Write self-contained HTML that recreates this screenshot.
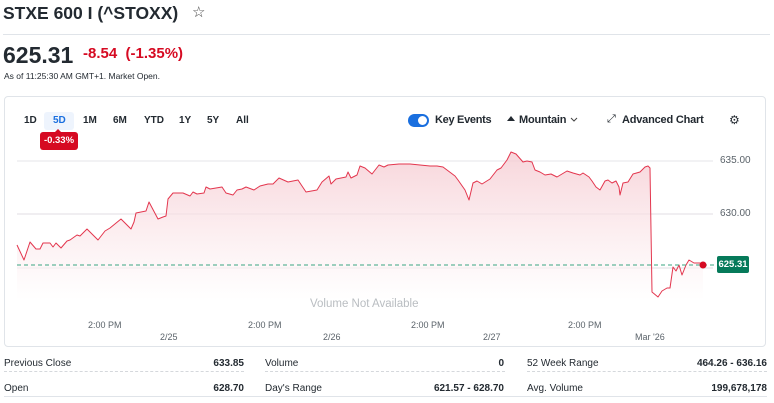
<!DOCTYPE html>
<html><head><meta charset="utf-8"><style>
*{margin:0;padding:0;box-sizing:border-box}
body{width:774px;height:403px;background:#fff;font-family:"Liberation Sans",sans-serif;color:#232a31;position:relative;overflow:hidden}
.a{position:absolute;white-space:nowrap}
.t{font-size:11px;font-weight:bold;color:#232a31}
.s{font-size:10px;color:#232a31}
.g{font-size:10px;color:#5b636a}
</style></head><body>
<div class="a" style="left:3px;top:3px;font-size:17.5px;font-weight:bold">STXE 600 I (^STOXX)</div>
<div class="a" style="left:192px;top:3px;font-size:15px;color:#444">☆</div>
<div class="a" style="left:3px;top:34px;width:767px;height:1px;background:#e0e4e9"></div>
<div class="a" style="left:3px;top:42px;font-size:23px;font-weight:bold">625.31</div>
<div class="a" style="left:83px;top:45px;font-size:15px;font-weight:bold;color:#d60a22">-8.54 &nbsp;(-1.35%)</div>
<div class="a" style="left:4px;top:71px;font-size:8.5px">As of 11:25:30 AM GMT+1. Market Open.</div>
<div class="a" style="left:4px;top:96px;width:762px;height:251px;border:1px solid #e0e4e9;border-radius:4px"></div>
<div class="a" style="left:44px;top:112px;width:30px;height:18px;background:#eef4fd;border-radius:3px"></div>
<div class="a t" style="left:24px;top:115px;font-size:10px">1D</div>
<div class="a t" style="left:53px;top:115px;font-size:10px;color:#1a6fdf">5D</div>
<div class="a t" style="left:83px;top:115px;font-size:10px">1M</div>
<div class="a t" style="left:113px;top:115px;font-size:10px">6M</div>
<div class="a t" style="left:144px;top:115px;font-size:10px">YTD</div>
<div class="a t" style="left:179px;top:115px;font-size:10px">1Y</div>
<div class="a t" style="left:207px;top:115px;font-size:10px">5Y</div>
<div class="a t" style="left:236px;top:115px;font-size:10px">All</div>
<div class="a" style="left:55px;top:129px;width:0;height:0;border-left:3px solid transparent;border-right:3px solid transparent;border-bottom:3px solid #d60a22"></div>
<div class="a" style="left:40px;top:132px;width:38px;height:18px;background:#d60a22;border-radius:3px;color:#fff;font-size:9.5px;font-weight:bold;text-align:center;line-height:18px">-0.33%</div>
<div class="a" style="left:408px;top:114px;width:21px;height:13px;background:#1a6fdf;border-radius:7px"><div style="position:absolute;right:2px;top:2px;width:9px;height:9px;background:#fff;border-radius:50%"></div></div>
<div class="a t" style="left:435px;top:114px;letter-spacing:-0.3px">Key Events</div>
<div class="a" style="left:507px;top:116px;width:0;height:0;border-left:4px solid transparent;border-right:4px solid transparent;border-bottom:5px solid #232a31"></div>
<div class="a t" style="left:519px;top:114px;letter-spacing:-0.2px">Mountain</div>
<svg class="a" style="left:570px;top:117px" width="8" height="6"><path d="M1,1 L4,4 L7,1" fill="none" stroke="#444" stroke-width="1"/></svg>
<div class="a" style="left:607px;top:113px;font-size:11px;color:#232a31">⤢</div>
<div class="a t" style="left:622px;top:114px;letter-spacing:-0.2px">Advanced Chart</div>
<div class="a" style="left:729px;top:113px;font-size:12px;color:#232a31">⚙</div>
<svg class="a" style="left:0;top:0" width="774" height="403">
<defs><linearGradient id="f" x1="0" y1="0" x2="0" y2="1"><stop offset="0" stop-color="#f5c8cf" stop-opacity=".75"/><stop offset="1" stop-color="#fff" stop-opacity=".6"/></linearGradient></defs>
<line x1="17" y1="161" x2="713" y2="161" stroke="#e6e6ea"/>
<line x1="17" y1="214" x2="713" y2="214" stroke="#e0dde3"/>
<line x1="17" y1="268" x2="713" y2="268" stroke="#e0dde3"/>
<path fill="url(#f)" stroke="none" d="M17,245 L24,260 L30,242 L36,249 L40,249 L43,243 L50,243 L53,247 L56,243 L61,248 L67,241 L70,240 L77,235 L80,236 L87,229 L98,240 L105,231 L110,228 L121,219 L131,229 L134,222 L136,213 L146,211 L149,202 L158,219 L163,217 L166,216 L168,199 L173,193 L183,193 L190,196 L193,192 L197,194 L204,193 L206,187 L210,189 L216,188 L222,187 L226,193 L233,195 L237,190 L242,189 L246,187 L254,190 L260,186 L268,184 L273,184 L279,178 L288,182 L298,180 L306,192 L317,190 L322,182 L329,176 L331,184 L336,179 L346,177 L348,172 L351,178 L357,175 L360,166 L365,168 L372,174 L379,165 L384,167 L388,165 L399,164 L410,164 L420,165 L430,166 L437,166 L443,167 L455,176 L458,180 L465,190 L469,200 L473,183 L477,181 L482,184 L490,179 L497,170 L501,168 L507,160 L511,152 L516,154 L523,162 L527,161 L532,162 L535,170 L540,172 L545,175 L551,174 L557,177 L567,171 L573,173 L580,175 L583,173 L589,177 L592,181 L596,187 L600,190 L605,181 L608,180 L612,183 L616,181 L619,187 L620,195 L623,183 L628,182 L633,174 L640,172 L645,167 L648,166 L650,168 L652,292 L658,297 L662,291 L667,288 L670,288 L673,267 L676,271 L679,265 L682,275 L686,265 L689,260 L694,263 L700,263 L703,265 L703,300 L17,300 Z"/>
<path fill="none" stroke="#e3364e" stroke-width="1" stroke-linejoin="round" d="M17,245 L24,260 L30,242 L36,249 L40,249 L43,243 L50,243 L53,247 L56,243 L61,248 L67,241 L70,240 L77,235 L80,236 L87,229 L98,240 L105,231 L110,228 L121,219 L131,229 L134,222 L136,213 L146,211 L149,202 L158,219 L163,217 L166,216 L168,199 L173,193 L183,193 L190,196 L193,192 L197,194 L204,193 L206,187 L210,189 L216,188 L222,187 L226,193 L233,195 L237,190 L242,189 L246,187 L254,190 L260,186 L268,184 L273,184 L279,178 L288,182 L298,180 L306,192 L317,190 L322,182 L329,176 L331,184 L336,179 L346,177 L348,172 L351,178 L357,175 L360,166 L365,168 L372,174 L379,165 L384,167 L388,165 L399,164 L410,164 L420,165 L430,166 L437,166 L443,167 L455,176 L458,180 L465,190 L469,200 L473,183 L477,181 L482,184 L490,179 L497,170 L501,168 L507,160 L511,152 L516,154 L523,162 L527,161 L532,162 L535,170 L540,172 L545,175 L551,174 L557,177 L567,171 L573,173 L580,175 L583,173 L589,177 L592,181 L596,187 L600,190 L605,181 L608,180 L612,183 L616,181 L619,187 L620,195 L623,183 L628,182 L633,174 L640,172 L645,167 L648,166 L650,168 L652,292 L658,297 L662,291 L667,288 L670,288 L673,267 L676,271 L679,265 L682,275 L686,265 L689,260 L694,263 L700,263 L703,265"/>
<line x1="17" y1="265" x2="717" y2="265" stroke="#3aa682" stroke-dasharray="4,3" stroke-width="1"/>
<circle cx="703" cy="265" r="3.5" fill="#d60a22"/>
</svg>
<div class="a g" style="left:720px;top:155px">635.00</div>
<div class="a g" style="left:720px;top:208px">630.00</div>
<div class="a" style="left:717px;top:256px;width:32px;height:17px;background:#067a5a;border-radius:2px;color:#fff;font-size:9.5px;font-weight:bold;text-align:center;line-height:17px">625.31</div>
<div class="a" style="left:310px;top:298px;font-size:11.5px;color:#b9bdc1">Volume Not Available</div>
<div class="a g" style="left:88px;top:320px;font-size:9px">2:00 PM</div>
<div class="a g" style="left:248px;top:320px;font-size:9px">2:00 PM</div>
<div class="a g" style="left:411px;top:320px;font-size:9px">2:00 PM</div>
<div class="a g" style="left:568px;top:320px;font-size:9px">2:00 PM</div>
<div class="a g" style="left:160px;top:332px;font-size:9px">2/25</div>
<div class="a g" style="left:323px;top:332px;font-size:9px">2/26</div>
<div class="a g" style="left:483px;top:332px;font-size:9px">2/27</div>
<div class="a g" style="left:635px;top:332px;font-size:9px">Mar '26</div>
<div class="a" style="left:4px;top:371px;width:240px;border-top:1px dashed #d5d8dc"></div>
<div class="a" style="left:265px;top:371px;width:240px;border-top:1px dashed #d5d8dc"></div>
<div class="a" style="left:527px;top:371px;width:240px;border-top:1px dashed #d5d8dc"></div>
<div class="a" style="left:4px;top:396px;width:763px;height:1px;background:#e0e4e9"></div>
<div class="a s" style="left:4px;top:358px">Previous Close</div>
<div class="a s" style="left:204px;top:358px;font-weight:bold;width:40px;text-align:right">633.85</div>
<div class="a s" style="left:265px;top:358px">Volume</div>
<div class="a s" style="left:454px;top:358px;font-weight:bold;width:50px;text-align:right">0</div>
<div class="a s" style="left:527px;top:358px">52 Week Range</div>
<div class="a s" style="left:667px;top:358px;font-weight:bold;width:100px;text-align:right">464.26 - 636.16</div>
<div class="a s" style="left:4px;top:383px">Open</div>
<div class="a s" style="left:204px;top:383px;font-weight:bold;width:40px;text-align:right">628.70</div>
<div class="a s" style="left:265px;top:383px">Day's Range</div>
<div class="a s" style="left:404px;top:383px;font-weight:bold;width:100px;text-align:right">621.57 - 628.70</div>
<div class="a s" style="left:527px;top:383px">Avg. Volume</div>
<div class="a s" style="left:667px;top:383px;font-weight:bold;width:100px;text-align:right">199,678,178</div>
</body></html>
